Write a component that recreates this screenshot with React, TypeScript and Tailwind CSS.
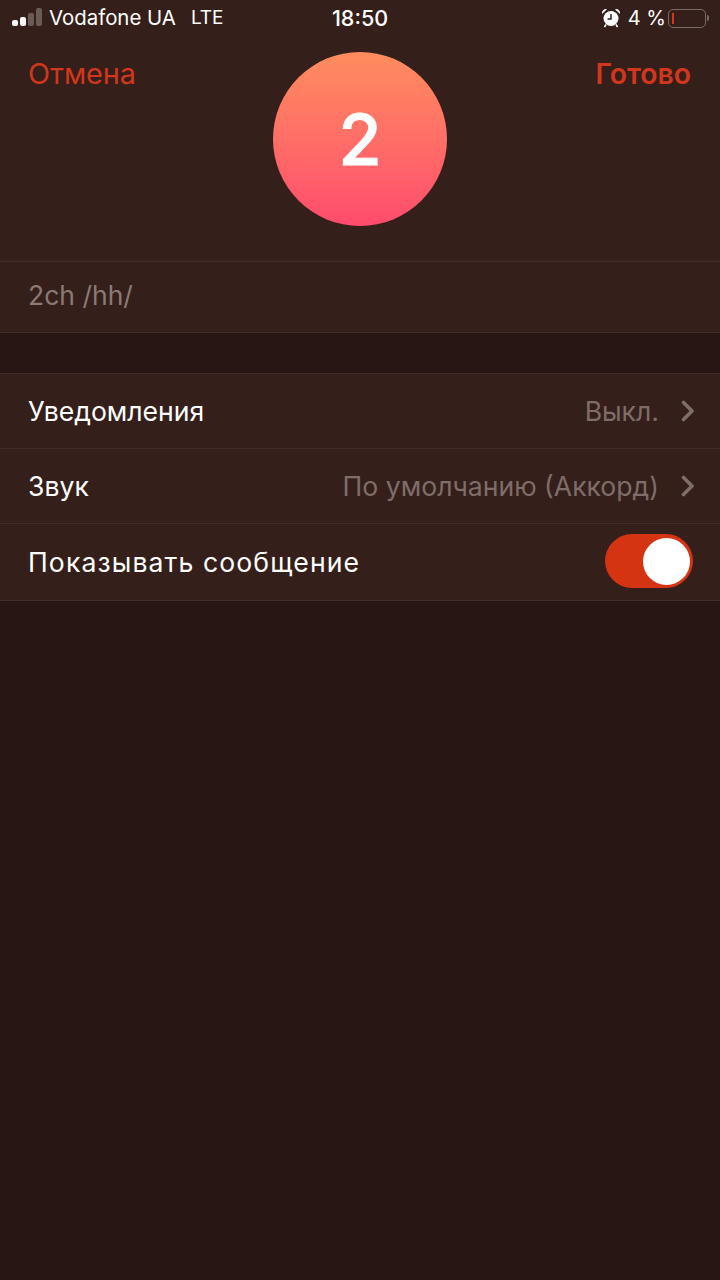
import React from "react";

const font = { fontFamily: "Inter, 'Noto Sans', sans-serif" };

function Signal() {
  return (
    <div className="flex items-end gap-[2px] h-[18px] w-[30px] -mt-[2px]">
      <div className="w-[6px] h-[6px] rounded-[2px] bg-white" />
      <div className="w-[6px] h-[9px] rounded-[2px] bg-white" />
      <div className="w-[6px] h-[13px] rounded-[2px] bg-[#6b5b57]" />
      <div className="w-[6px] h-[18px] rounded-[2px] bg-[#6b5b57]" />
    </div>
  );
}

function Alarm() {
  return (
    <svg width="20" height="20" viewBox="0 0 20 20" className="block">
      <circle cx="10" cy="10.5" r="7.5" fill="#fff" />
      <path d="M10 6V11H6.5" stroke="#33201b" strokeWidth="1.5" fill="none" />
      <path d="M1 6 A4 4 0 0 1 6 1.2 Z M19 6 A4 4 0 0 0 14 1.2 Z" fill="#fff" />
      <path d="M5 16.5L3.5 19M15 16.5L16.5 19" stroke="#fff" strokeWidth="1.6" />
    </svg>
  );
}

function Battery() {
  return (
    <div className="flex items-center">
      <div className="w-[38px] h-[19px] rounded-[5px] border border-[#7a6a66] flex items-center pl-[3px]">
        <div className="w-[2px] h-[11px] bg-[#d9341a]" />
      </div>
      <div className="w-[2px] h-[6px] rounded-r-[2px] bg-[#7a6a66] ml-[1px]" />
    </div>
  );
}

function Chevron() {
  return (
    <svg width="14" height="22" viewBox="0 0 14 22" className="block">
      <path d="M2.5 2.5L11 11L2.5 19.5" stroke="#7e6d69" strokeWidth="3.6" fill="none" strokeLinecap="round" strokeLinejoin="round" />
    </svg>
  );
}

function Row({ label, value }: { label: string; value: string }) {
  return (
    <div className="h-[75px] flex items-center pl-[28px] pr-[25px] border-b border-[#422c27]">
      <span className="text-[26.6px] text-white flex-1 pt-[2px]">{label}</span>
      <span className="text-[26.6px] text-[#7e6d69] mr-[22px] pt-[2px]">{value}</span>
      <Chevron />
    </div>
  );
}

export default function App() {
  return (
    <div className="w-[720px] h-[1280px] bg-[#281614] overflow-hidden" style={font}>
      <div className="bg-[#351f1a] h-[333px] border-b border-[#422c27] flex flex-col">
        <div className="relative h-[36px] flex items-center pl-[12px] pr-[11px] text-white">
          <Signal />
          <span className="text-[20.4px] ml-[7px]">Vodafone UA</span>
          <span className="text-[19px] ml-[15px]">LTE</span>
          <span className="absolute left-0 right-0 text-center text-[21.5px] font-medium">18:50</span>
          <div className="ml-auto flex items-center">
            <Alarm />
            <span className="text-[20px] ml-[7px] mr-[2px]">4 %</span>
            <Battery />
          </div>
        </div>
        <div className="h-[225px] flex justify-between pl-[28px] pr-[29px] relative">
          <span className="text-[28.8px] text-[#d2371e] mt-[19px] leading-[38px]">Отмена</span>
          <div className="absolute left-[273px] top-[16px] w-[174px] h-[174px] rounded-full bg-gradient-to-b from-[#ff8c5e] to-[#ff4a6d] flex items-center justify-center">
            <span className="text-[70px] font-medium text-white leading-none [-webkit-text-stroke:1px_white] pt-[2px]">2</span>
          </div>
          <span className="text-[28.3px] font-semibold text-[#d2371e] mt-[19px] leading-[38px]">Готово</span>
        </div>
        <div className="flex-1 border-t border-[#422c27] flex items-center pl-[28px]">
          <span className="text-[26.5px] text-[#8a7a75] pb-[2px]">2ch /hh/</span>
        </div>
      </div>
      <div className="mt-[40px] bg-[#351f1a] border-y border-[#422c27]">
        <Row label="Уведомления" value="Выкл." />
        <Row label="Звук" value="По умолчанию (Аккорд)" />
        <div className="h-[76px] flex items-center pl-[28px] pr-[27px]">
          <span className="text-[26.6px] text-white flex-1 pt-[2px] tracking-[1.1px]">Показывать сообщение</span>
          <div className="w-[88px] h-[54px] rounded-full bg-[#d53413] flex items-center justify-end pr-[3px] -mt-[2px]">
            <div className="w-[47px] h-[47px] rounded-full bg-white" />
          </div>
        </div>
      </div>
    </div>
  );
}
